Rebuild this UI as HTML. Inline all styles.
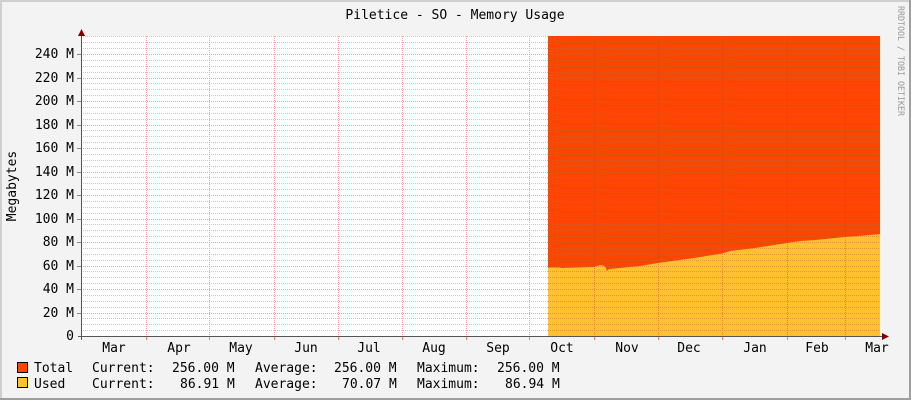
<!DOCTYPE html>
<html><head><meta charset="utf-8"><style>
html,body{margin:0;padding:0;background:#f3f3f3}
svg{display:block}
text{font-family:"DejaVu Sans Mono","Liberation Mono",monospace;fill:#000}
</style></head><body>
<svg width="911" height="400" viewBox="0 0 911 400" xmlns="http://www.w3.org/2000/svg">
<rect x="0" y="0" width="911" height="400" fill="#f3f3f3"/>
<rect x="0" y="0" width="911" height="2" fill="#cfcfcf"/>
<rect x="0" y="0" width="2" height="400" fill="#cfcfcf"/>
<rect x="0" y="398" width="911" height="2" fill="#9e9e9e"/>
<rect x="909" y="0" width="2" height="400" fill="#9e9e9e"/>
<rect x="81" y="36" width="799" height="300" fill="#fff"/>
<!-- minor horizontal grid -->
<path stroke="#c8c8c8" stroke-width="1" stroke-dasharray="1,1" fill="none" d="M81 330.5H548M81 324.5H548M81 318.5H548M81 307.5H548M81 301.5H548M81 295.5H548M81 283.5H548M81 277.5H548M81 271.5H548M81 260.5H548M81 254.5H548M81 248.5H548M81 236.5H548M81 230.5H548M81 224.5H548M81 213.5H548M81 207.5H548M81 201.5H548M81 189.5H548M81 183.5H548M81 177.5H548M81 166.5H548M81 160.5H548M81 154.5H548M81 142.5H548M81 136.5H548M81 130.5H548M81 119.5H548M81 113.5H548M81 107.5H548M81 95.5H548M81 89.5H548M81 83.5H548M81 72.5H548M81 66.5H548M81 60.5H548M81 48.5H548M81 42.5H548M81 36.5H548"/>
<!-- major horizontal grid -->
<path stroke="#f2a0a0" stroke-width="1" stroke-dasharray="1,1" fill="none" d="M81 313.5H548M81 289.5H548M81 266.5H548M81 242.5H548M81 219.5H548M81 195.5H548M81 172.5H548M81 148.5H548M81 125.5H548M81 101.5H548M81 78.5H548M81 54.5H548"/>
<!-- vertical grid -->
<path stroke="#f5a0a0" stroke-width="1" stroke-dasharray="1,1" fill="none" d="M146.5 36V336M209.5 36V336M274.5 36V336M338.5 36V336M402.5 36V336M466.5 36V336M529.5 36V336"/>
<!-- areas -->
<rect x="548" y="36" width="332" height="300" fill="#ff4500"/>
<path d="M548 336 L548 267.5 L560 267.5 L561 268 L594 267 L597 266 L601 265 L604 266 L606 268 L607 271 L609 269 L620 268 L640 266 L658 263 L690 258.5 L700 257 L722 253.5 L730 251 L755 248 L787 243 L800 241 L815 240 L845 237 L865 235.5 L880 234 L880 336 Z" fill="#ffc130"/>
<!-- grid over areas -->
<g opacity="0.45">
<path stroke="#c06030" stroke-width="1" stroke-dasharray="1,1" fill="none" d="M548 330.5H880M548 324.5H880M548 318.5H880M548 307.5H880M548 301.5H880M548 295.5H880M548 283.5H880M548 277.5H880M548 271.5H880M548 260.5H880M548 254.5H880M548 248.5H880M548 236.5H880M548 230.5H880M548 224.5H880M548 213.5H880M548 207.5H880M548 201.5H880M548 189.5H880M548 183.5H880M548 177.5H880M548 166.5H880M548 160.5H880M548 154.5H880M548 142.5H880M548 136.5H880M548 130.5H880M548 119.5H880M548 113.5H880M548 107.5H880M548 95.5H880M548 89.5H880M548 83.5H880M548 72.5H880M548 66.5H880M548 60.5H880M548 48.5H880M548 42.5H880M548 313.5H880M548 289.5H880M548 266.5H880M548 242.5H880M548 219.5H880M548 195.5H880M548 172.5H880M548 148.5H880M548 125.5H880M548 101.5H880M548 78.5H880M548 54.5H880"/>
<path stroke="#c04020" stroke-width="1" stroke-dasharray="1,1" fill="none" d="M594.5 36V336M658.5 36V336M722.5 36V336M787.5 36V336M845.5 36V336"/>
</g>
<!-- ticks -->
<path stroke="#888" stroke-width="1" fill="none" d="M77 313.5H81M77 289.5H81M77 266.5H81M77 242.5H81M77 219.5H81M77 195.5H81M77 172.5H81M77 148.5H81M77 125.5H81M77 101.5H81M77 78.5H81M77 54.5H81"/>
<path stroke="#f08080" stroke-width="1" fill="none" d="M146.5 336V340M209.5 336V340M274.5 336V340M338.5 336V340M402.5 336V340M466.5 336V340M529.5 336V340M594.5 336V340M658.5 336V340M722.5 336V340M787.5 336V340M845.5 336V340"/>
<!-- axes -->
<line x1="81.5" y1="33" x2="81.5" y2="340" stroke="#555" stroke-width="1"/>
<line x1="78" y1="336.5" x2="885" y2="336.5" stroke="#555" stroke-width="1"/>
<polygon points="78,36 85,36 81.5,29" fill="#800000"/>
<polygon points="882,333 882,340 889,336.5" fill="#800000"/>
<text x="455" y="19" font-size="13" text-anchor="middle">Piletice - SO - Memory Usage</text>
<text transform="translate(898,6) rotate(90)" font-size="8.5" style="fill:#999" textLength="110" lengthAdjust="spacingAndGlyphs">RRDTOOL / TOBI OETIKER</text>
<text transform="translate(16,186) rotate(-90)" font-size="13" text-anchor="middle">Megabytes</text>
<g font-size="13" text-anchor="end">
<text x="74" y="340">0</text>
<text x="74" y="317">20 M</text>
<text x="74" y="293">40 M</text>
<text x="74" y="270">60 M</text>
<text x="74" y="246">80 M</text>
<text x="74" y="223">100 M</text>
<text x="74" y="199">120 M</text>
<text x="74" y="176">140 M</text>
<text x="74" y="152">160 M</text>
<text x="74" y="129">180 M</text>
<text x="74" y="105">200 M</text>
<text x="74" y="82">220 M</text>
<text x="74" y="58">240 M</text>
</g>
<g font-size="13" text-anchor="middle">
<text x="114" y="352">Mar</text>
<text x="179" y="352">Apr</text>
<text x="241" y="352">May</text>
<text x="306" y="352">Jun</text>
<text x="369" y="352">Jul</text>
<text x="434" y="352">Aug</text>
<text x="498" y="352">Sep</text>
<text x="562" y="352">Oct</text>
<text x="627" y="352">Nov</text>
<text x="689" y="352">Dec</text>
<text x="755" y="352">Jan</text>
<text x="817" y="352">Feb</text>
<text x="877" y="352">Mar</text>
</g>
<rect x="17.5" y="362.5" width="10" height="10" fill="#ff4500" stroke="#000"/>
<rect x="17.5" y="377.5" width="10" height="10" fill="#ffc130" stroke="#000"/>
<g font-size="13">
<text x="34" y="372">Total</text>
<text x="92" y="372">Current:</text>
<text x="172" y="372">256.00 M</text>
<text x="255" y="372">Average:</text>
<text x="334" y="372">256.00 M</text>
<text x="417" y="372">Maximum:</text>
<text x="497" y="372">256.00 M</text>
<text x="34" y="388">Used</text>
<text x="92" y="388">Current:</text>
<text x="180" y="388">86.91 M</text>
<text x="255" y="388">Average:</text>
<text x="342" y="388">70.07 M</text>
<text x="417" y="388">Maximum:</text>
<text x="505" y="388">86.94 M</text>
</g>
</svg>
</body></html>
